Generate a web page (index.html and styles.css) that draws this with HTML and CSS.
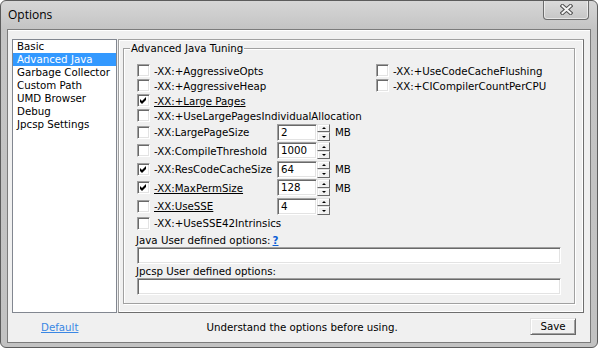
FILE: index.html
```html
<!DOCTYPE html>
<html>
<head>
<meta charset="utf-8">
<title>Options</title>
<link rel="stylesheet" href="styles.css">
</head>
<body>
<div class="window">
  <div class="titlebar">
    <span class="title">Options</span>
    <div class="close">
      <svg width="13" height="11" viewBox="0 0 13 11">
        <path d="M2.5 2 L10.5 9 M10.5 2 L2.5 9" stroke="#505050" stroke-width="4" stroke-linecap="square" fill="none"/>
        <path d="M2.5 2 L10.5 9 M10.5 2 L2.5 9" stroke="#f4f4f4" stroke-width="2" stroke-linecap="square" fill="none"/>
      </svg>
    </div>
  </div>
  <div class="client">
    <div class="main">
      <ul class="navlist">
        <li>Basic</li>
        <li class="sel">Advanced Java</li>
        <li>Garbage Collector</li>
        <li>Custom Path</li>
        <li>UMD Browser</li>
        <li>Debug</li>
        <li>Jpcsp Settings</li>
      </ul>
      <div class="panel">
        <div class="group">
          <span class="caption">Advanced Java Tuning</span>
          <div class="cols">
            <div class="col left">
              <div class="check"><span class="box"></span><span>-XX:+AggressiveOpts</span></div>
              <div class="check"><span class="box"></span><span>-XX:+AggressiveHeap</span></div>
              <div class="check"><span class="box on"><svg width="7" height="7" viewBox="0 0 7 7"><path d="M0 2 L2 4 L6 0 L6 3 L2 7 L0 5 Z" fill="#000"/></svg></span><span class="u">-XX:+Large Pages</span></div>
              <div class="check"><span class="box"></span><span>-XX:+UseLargePagesIndividualAllocation</span></div>
              <div class="spin-row">
                <div class="check"><span class="box"></span><span>-XX:LargePageSize</span></div>
                <div class="field">2</div>
                <div class="spin"><span class="sbtn up"></span><span class="sbtn down"></span></div>
                <span class="unit">MB</span>
              </div>
              <div class="spin-row">
                <div class="check"><span class="box"></span><span>-XX:CompileThreshold</span></div>
                <div class="field">1000</div>
                <div class="spin"><span class="sbtn up"></span><span class="sbtn down"></span></div>
              </div>
              <div class="spin-row">
                <div class="check"><span class="box on"><svg width="7" height="7" viewBox="0 0 7 7"><path d="M0 2 L2 4 L6 0 L6 3 L2 7 L0 5 Z" fill="#000"/></svg></span><span>-XX:ResCodeCacheSize</span></div>
                <div class="field">64</div>
                <div class="spin"><span class="sbtn up"></span><span class="sbtn down"></span></div>
                <span class="unit">MB</span>
              </div>
              <div class="spin-row">
                <div class="check"><span class="box on"><svg width="7" height="7" viewBox="0 0 7 7"><path d="M0 2 L2 4 L6 0 L6 3 L2 7 L0 5 Z" fill="#000"/></svg></span><span class="u">-XX:MaxPermSize</span></div>
                <div class="field">128</div>
                <div class="spin"><span class="sbtn up"></span><span class="sbtn down"></span></div>
                <span class="unit">MB</span>
              </div>
              <div class="spin-row">
                <div class="check"><span class="box"></span><span class="u">-XX:UseSSE</span></div>
                <div class="field">4</div>
                <div class="spin"><span class="sbtn up"></span><span class="sbtn down"></span></div>
              </div>
              <div class="check"><span class="box"></span><span>-XX:+UseSSE42Intrinsics</span></div>
              <div class="optlabel first">Java User defined options:<span class="help">?</span></div>
              <div class="textfield"></div>
              <div class="optlabel">Jpcsp User defined options:</div>
              <div class="textfield"></div>
            </div>
            <div class="col right">
              <div class="check"><span class="box"></span><span>-XX:+UseCodeCacheFlushing</span></div>
              <div class="check"><span class="box"></span><span>-XX:+CICompilerCountPerCPU</span></div>
            </div>
          </div>
        </div>
      </div>
    </div>
    <div class="footer">
      <a class="link">Default</a>
      <span class="msg">Understand the options before using.</span>
      <button class="btn">Save</button>
    </div>
  </div>
</div>
</body>
</html>
```
FILE: styles.css
```css
* { box-sizing: border-box; }
html, body { margin: 0; background: #fff; }
body {
  font-family: "DejaVu Sans", Verdana, sans-serif;
  font-size: 10.25px;
  color: #000;
}
.window {
  width: 598px;
  height: 348px;
  border: 1px solid #5c5c5c;
  border-radius: 6px;
  background: linear-gradient(#d6d6d6 0, #c4c4c4 28px, #c2c2c2 100%);
  display: flex;
  flex-direction: column;
  overflow: hidden;
}
.titlebar {
  height: 28px;
  flex: none;
  display: flex;
  align-items: flex-start;
}
.title {
  font-family: "Open Sans", "Noto Sans", sans-serif;
  font-size: 12px;
  line-height: 16px;
  margin: 6px 0 0 7px;
}
.close {
  margin-left: auto;
  margin-right: 8px;
  margin-top: -1px;
  width: 46px;
  height: 20px;
  border: 1px solid #6c6c6c;
  border-top: 0;
  border-radius: 0 0 4px 4px;
  background: linear-gradient(#dcdcdc, #c6c6c6);
  box-shadow: inset 0 0 0 1px rgba(255, 255, 255, 0.55);
  display: flex;
  align-items: center;
  justify-content: center;
}
.client {
  margin: 0 6px;
  height: 314px;
  border: 1px solid #7b7b7b;
  background: #f0f0f0;
  box-shadow: inset 0 1px 0 #fff;
  display: flex;
  flex-direction: column;
}
.main {
  height: 283px;
  flex: none;
  display: flex;
  gap: 1px;
  padding: 9px 6px 0 4px;
}
.navlist {
  list-style: none;
  margin: 0;
  padding: 0;
  width: 105px;
  flex: none;
  background: #fff;
  border: 1px solid #828790;
}
.navlist li {
  height: 13px;
  line-height: 13px;
  padding-left: 4px;
  white-space: nowrap;
}
.navlist li.sel { background: #3399ff; color: #fff; }
.panel {
  width: 466px;
  flex: none;
  border: 1px solid;
  border-color: #a0a0a0 #6e6e6e #6e6e6e #a0a0a0;
  box-shadow: inset 1px 1px 0 #fff, inset -1px -1px 0 #fff;
  padding: 0 0 0 4px;
}
.group {
  position: relative;
  margin-top: 8px;
  width: 452px;
  height: 256px;
  border: 1px solid #a0a0a0;
  box-shadow: inset 1px 1px 0 #fff, 1px 1px 0 #fff;
  padding: 14px 0 0 13px;
}
.caption {
  position: absolute;
  left: 6px;
  top: -7px;
  padding: 0 1px;
  line-height: 13px;
  background: #f0f0f0;
  white-space: nowrap;
}
.cols { display: flex; }
.col { display: flex; flex-direction: column; }
.col.left { width: 239px; flex: none; }
.check {
  display: flex;
  align-items: center;
  height: 15px;
  white-space: nowrap;
}
.box {
  width: 13px;
  height: 13px;
  flex: none;
  margin-right: 4px;
  background: #fff;
  border: 1px solid;
  border-color: #a0a0a0 #fff #fff #a0a0a0;
  box-shadow: inset 1px 1px 0 #696969, inset -1px -1px 0 #e3e3e3;
  display: flex;
  align-items: center;
  justify-content: center;
}
.box svg { display: block; }
.u { text-decoration: underline; }
.spin-row {
  display: flex;
  align-items: center;
  height: 18.5px;
}
.spin-row .check { width: 140px; flex: none; }
.field, .textfield {
  background: #fff;
  border: 1px solid;
  border-color: #a0a0a0 #fff #fff #a0a0a0;
  box-shadow: inset 1px 1px 0 #696969, inset -1px -1px 0 #e3e3e3;
}
.field {
  width: 40px;
  height: 17px;
  padding: 0 3px;
  line-height: 15px;
}
.spin {
  width: 13px;
  height: 17px;
  display: flex;
  flex-direction: column;
}
.sbtn {
  height: 8.5px;
  background: #f0f0f0;
  border: 1px solid;
  border-color: #e3e3e3 #696969 #696969 #e3e3e3;
  box-shadow: inset 1px 1px 0 #fff;
  display: flex;
  align-items: center;
  justify-content: center;
}
.sbtn::after {
  content: "";
  width: 0;
  height: 0;
  border-left: 2px solid transparent;
  border-right: 2px solid transparent;
}
.sbtn.up::after { border-bottom: 2px solid #000; }
.sbtn.down::after { border-top: 2px solid #000; }
.unit { margin-left: 5px; }
.optlabel {
  height: 14px;
  line-height: 14px;
  margin-left: -1px;
  white-space: nowrap;
}
.optlabel.first { margin-top: 2px; }
.help {
  color: #0b5fd6;
  font-weight: bold;
  text-decoration: underline;
  margin-left: 2px;
}
.textfield {
  width: 424px;
  height: 17px;
}
.footer {
  flex: 1;
  display: flex;
  align-items: center;
  padding: 0 14px 2px 33px;
}
.link {
  color: #3a87e4;
  text-decoration: underline;
}
.msg { margin-left: 128px; }
.btn {
  margin-left: auto;
  width: 46px;
  height: 17px;
  padding: 0;
  font: inherit;
  color: #000;
  line-height: 15px;
  text-align: center;
  background: #f0f0f0;
  border: 1px solid;
  border-color: #e3e3e3 #696969 #696969 #e3e3e3;
  box-shadow: inset 1px 1px 0 #fff, inset -1px -1px 0 #a0a0a0;
}
```
